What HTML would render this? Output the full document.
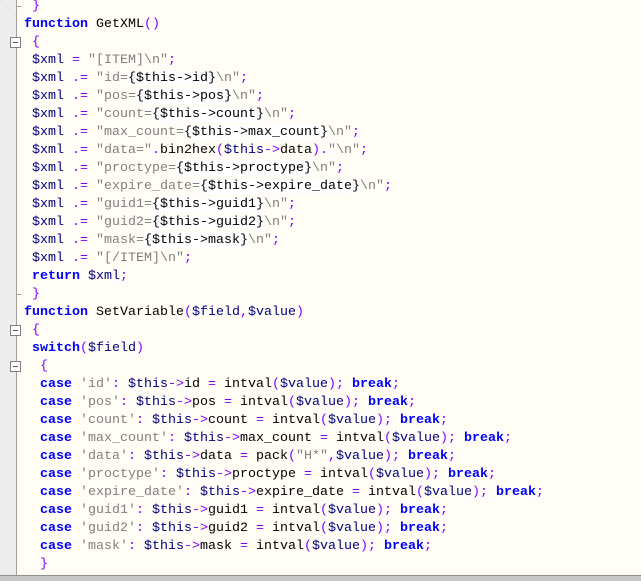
<!DOCTYPE html><html><head><style>
body{margin:0;width:641px;height:580px;overflow:hidden;background:#fffdf6;position:relative;font-family:"Liberation Mono",monospace;font-size:13.33px}
#g{position:absolute;left:0;top:0;width:16px;height:575px;background:repeating-linear-gradient(45deg,#e6e6e6 0 1px,#f4f4f4 1px 2px)}
#gl{position:absolute;left:16px;top:0;width:1px;height:575px;background:#a0a0a0}
#bar{position:absolute;left:0;top:575px;width:641px;height:5px;background:#c8c8c8;border-top:1px solid #909090}
.fb{position:absolute;left:10px;width:9px;height:9px;border:1px solid #808080;background:#fff}
.fb:after{content:"";position:absolute;left:2px;top:4px;width:5px;height:1px;background:#606060}
.tk{position:absolute;left:16px;width:5px;height:1px;background:#a0a0a0}
pre{position:absolute;left:24px;top:-2px;margin:0;line-height:18px;font-family:inherit;color:#000}
.k{color:#0000ff;font-weight:bold}.v{color:#000080}.s{color:#808080}.o{color:#8000ff}.b{background:#fff;color:#000}
</style></head><body>
<div id="g"></div><div id="gl"></div>
<div class="tk" style="top:6px"></div><div class="tk" style="top:294px"></div>
<div class="fb" style="top:37px"></div><div class="fb" style="top:325px"></div><div class="fb" style="top:361px"></div>
<pre> <span class="o">}</span>
<span class="k">function</span> GetXML<span class="o">()</span>
 <span class="o">{</span>
 <span class="v">$xml</span> <span class="o">=</span> <span class="s">"[ITEM]\n"</span><span class="o">;</span>
 <span class="v">$xml</span> <span class="o">.=</span> <span class="s">"id=</span><span class="b">{$this-&gt;id}</span><span class="s">\n"</span><span class="o">;</span>
 <span class="v">$xml</span> <span class="o">.=</span> <span class="s">"pos=</span><span class="b">{$this-&gt;pos}</span><span class="s">\n"</span><span class="o">;</span>
 <span class="v">$xml</span> <span class="o">.=</span> <span class="s">"count=</span><span class="b">{$this-&gt;count}</span><span class="s">\n"</span><span class="o">;</span>
 <span class="v">$xml</span> <span class="o">.=</span> <span class="s">"max_count=</span><span class="b">{$this-&gt;max_count}</span><span class="s">\n"</span><span class="o">;</span>
 <span class="v">$xml</span> <span class="o">.=</span> <span class="s">"data="</span><span class="o">.</span>bin2hex<span class="o">(</span><span class="v">$this</span><span class="o">-&gt;</span>data<span class="o">).</span><span class="s">"\n"</span><span class="o">;</span>
 <span class="v">$xml</span> <span class="o">.=</span> <span class="s">"proctype=</span><span class="b">{$this-&gt;proctype}</span><span class="s">\n"</span><span class="o">;</span>
 <span class="v">$xml</span> <span class="o">.=</span> <span class="s">"expire_date=</span><span class="b">{$this-&gt;expire_date}</span><span class="s">\n"</span><span class="o">;</span>
 <span class="v">$xml</span> <span class="o">.=</span> <span class="s">"guid1=</span><span class="b">{$this-&gt;guid1}</span><span class="s">\n"</span><span class="o">;</span>
 <span class="v">$xml</span> <span class="o">.=</span> <span class="s">"guid2=</span><span class="b">{$this-&gt;guid2}</span><span class="s">\n"</span><span class="o">;</span>
 <span class="v">$xml</span> <span class="o">.=</span> <span class="s">"mask=</span><span class="b">{$this-&gt;mask}</span><span class="s">\n"</span><span class="o">;</span>
 <span class="v">$xml</span> <span class="o">.=</span> <span class="s">"[/ITEM]\n"</span><span class="o">;</span>
 <span class="k">return</span> <span class="v">$xml</span><span class="o">;</span>
 <span class="o">}</span>
<span class="k">function</span> SetVariable<span class="o">(</span><span class="v">$field</span><span class="o">,</span><span class="v">$value</span><span class="o">)</span>
 <span class="o">{</span>
 <span class="k">switch</span><span class="o">(</span><span class="v">$field</span><span class="o">)</span>
  <span class="o">{</span>
  <span class="k">case</span> <span class="s">'id'</span><span class="o">:</span> <span class="v">$this</span><span class="o">-&gt;</span>id <span class="o">=</span> intval<span class="o">(</span><span class="v">$value</span><span class="o">);</span> <span class="k">break</span><span class="o">;</span>
  <span class="k">case</span> <span class="s">'pos'</span><span class="o">:</span> <span class="v">$this</span><span class="o">-&gt;</span>pos <span class="o">=</span> intval<span class="o">(</span><span class="v">$value</span><span class="o">);</span> <span class="k">break</span><span class="o">;</span>
  <span class="k">case</span> <span class="s">'count'</span><span class="o">:</span> <span class="v">$this</span><span class="o">-&gt;</span>count <span class="o">=</span> intval<span class="o">(</span><span class="v">$value</span><span class="o">);</span> <span class="k">break</span><span class="o">;</span>
  <span class="k">case</span> <span class="s">'max_count'</span><span class="o">:</span> <span class="v">$this</span><span class="o">-&gt;</span>max_count <span class="o">=</span> intval<span class="o">(</span><span class="v">$value</span><span class="o">);</span> <span class="k">break</span><span class="o">;</span>
  <span class="k">case</span> <span class="s">'data'</span><span class="o">:</span> <span class="v">$this</span><span class="o">-&gt;</span>data <span class="o">=</span> pack<span class="o">(</span><span class="s">"H*"</span><span class="o">,</span><span class="v">$value</span><span class="o">);</span> <span class="k">break</span><span class="o">;</span>
  <span class="k">case</span> <span class="s">'proctype'</span><span class="o">:</span> <span class="v">$this</span><span class="o">-&gt;</span>proctype <span class="o">=</span> intval<span class="o">(</span><span class="v">$value</span><span class="o">);</span> <span class="k">break</span><span class="o">;</span>
  <span class="k">case</span> <span class="s">'expire_date'</span><span class="o">:</span> <span class="v">$this</span><span class="o">-&gt;</span>expire_date <span class="o">=</span> intval<span class="o">(</span><span class="v">$value</span><span class="o">);</span> <span class="k">break</span><span class="o">;</span>
  <span class="k">case</span> <span class="s">'guid1'</span><span class="o">:</span> <span class="v">$this</span><span class="o">-&gt;</span>guid1 <span class="o">=</span> intval<span class="o">(</span><span class="v">$value</span><span class="o">);</span> <span class="k">break</span><span class="o">;</span>
  <span class="k">case</span> <span class="s">'guid2'</span><span class="o">:</span> <span class="v">$this</span><span class="o">-&gt;</span>guid2 <span class="o">=</span> intval<span class="o">(</span><span class="v">$value</span><span class="o">);</span> <span class="k">break</span><span class="o">;</span>
  <span class="k">case</span> <span class="s">'mask'</span><span class="o">:</span> <span class="v">$this</span><span class="o">-&gt;</span>mask <span class="o">=</span> intval<span class="o">(</span><span class="v">$value</span><span class="o">);</span> <span class="k">break</span><span class="o">;</span>
  <span class="o">}</span></pre>
<div id="bar"></div>
</body></html>
